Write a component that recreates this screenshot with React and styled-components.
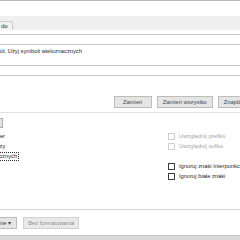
import React from 'react'
import styled, { createGlobalStyle } from 'styled-components'

const GlobalStyle = createGlobalStyle`
  html, body {
    margin: 0;
    padding: 0;
    background: #fff;
  }
  body {
    font-family: "Liberation Sans", Arial, sans-serif;
  }
`

const Screen = styled.div`
  width: 240px;
  height: 240px;
  overflow: hidden;
  background: #fff;
  font-size: 5.75px;
  color: #262626;
`

// the dialog is wider than the shot, its left side falls out of view
const Dialog = styled.div`
  width: 407px;
  margin-left: -84px;
  border-top: 1px solid #b9b9b9;
  box-sizing: border-box;
`

const TitleBar = styled.div`
  height: 15px;
`

const TabStrip = styled.div`
  display: flex;
  align-items: flex-end;
  height: 14px;
  padding-left: 6px;
  background: #efefef;
`

const Tab = styled.div`
  height: 9px;
  padding: 0 4px;
  margin-left: -1px;
  line-height: 8px;
  box-sizing: border-box;
  border: 1px solid #cdcdcd;
  border-bottom: 0;
  background: ${({ active }) => active ? '#fff' : '#f2f2f2'};
`

const Panel = styled.div`
  padding: 4px 8px 0;
`

const FieldRow = styled.div`
  display: flex;
  margin-top: ${({ top }) => top || 0}px;
`

const FieldLabel = styled.div`
  width: ${({ width }) => width || 41}px;
  flex-shrink: 0;
  line-height: ${({ height }) => height || 11}px;
`

const Input = styled.div`
  flex: 1;
  height: 11px;
  box-sizing: border-box;
  border: 1px solid #c6c6c6;
  background: #fff;
`

const OptionsLine = styled.div`
  display: flex;
  height: 13px;
  line-height: 13px;
`

const ButtonRow = styled.div`
  display: flex;
  gap: ${({ gap }) => gap || 5}px;
  margin-top: ${({ top }) => top || 0}px;
  padding-left: ${({ indent }) => indent || 0}px;
`

const Button = styled.button`
  min-width: 38px;
  height: 12px;
  padding: 0 ${({ tight }) => tight ? 4 : 5}px;
  margin: 0;
  font-family: inherit;
  font-size: inherit;
  line-height: 10px;
  white-space: nowrap;
  color: ${({ disabled }) => disabled ? '#8e8e8e' : '#444'};
  background: ${({ disabled }) => disabled ? '#e9e9e9' : '#e5e5e5'};
  border: 1px solid ${({ disabled }) => disabled ? '#d2d2d2' : '#bcbcbc'};
  border-radius: 0;
  box-sizing: border-box;
  &:first-child {
    margin-right: ${({ push }) => push ? 'auto' : '0'};
  }
`

const GroupHeader = styled.div`
  display: flex;
  align-items: center;
  gap: 3px;
  height: 9px;
  margin-top: ${({ top }) => top || 0}px;
  &::after {
    content: '';
    flex: 1;
    height: 1px;
    background: ${({ line }) => line || '#e2e2e2'};
  }
`

const SelectRow = styled.div`
  display: flex;
  align-items: center;
  height: 10px;
  margin-top: 1px;
`

const Select = styled.div`
  width: 40px;
  height: 10px;
  padding: 0 3px;
  line-height: 8px;
  box-sizing: border-box;
  background: #e4e4e4;
  border: 1px solid #adadad;
`

const OptionsGrid = styled.div`
  display: grid;
  grid-template-columns: 237px 1fr;
  grid-auto-rows: 10px;
  margin-top: 3px;
  padding-left: 7px;
`

const Check = styled.div`
  display: flex;
  align-items: center;
  gap: ${({ right }) => right ? 2 : 3}px;
  white-space: nowrap;
  color: ${({ disabled }) => disabled ? '#a3a3a3' : '#262626'};
`

const Box = styled.span`
  width: 7px;
  height: 7px;
  flex-shrink: 0;
  box-sizing: border-box;
  background: #fff;
  border: 1px solid ${({ disabled }) => disabled ? '#d0d0d0' : '#3c3c3c'};
`

const CheckText = styled.span`
  padding: 0 1px;
  line-height: 7px;
  border: 1px dotted ${({ focused }) => focused ? '#333' : 'transparent'};
`

const Footer = styled.div`
  height: 8px;
  margin-top: 6px;
  background: #d8d8d8;
  border-top: 1px solid #c8c8c8;
`

const Option = ({ label, disabled, focused, right }) => (
  <Check disabled={disabled} right={right}>
    <Box disabled={disabled} />
    <CheckText focused={focused}>{label}</CheckText>
  </Check>
)

const Empty = styled.div``

export default function App() {
  return (
    <Screen>
      <GlobalStyle />
      <Dialog>
        <TitleBar />
        <TabStrip>
          <Tab>Znajdź</Tab>
          <Tab active>Zamień</Tab>
          <Tab>Przejdź do</Tab>
        </TabStrip>
        <Panel>
          <FieldRow>
            <FieldLabel>Znajdź:</FieldLabel>
            <Input />
          </FieldRow>
          <OptionsLine>
            <FieldLabel height={13}>Opcje:</FieldLabel>
            <span>Wyszukaj w dół, Użyj symboli wieloznacznych</span>
          </OptionsLine>
          <FieldRow top={7}>
            <FieldLabel>Zamień na:</FieldLabel>
            <Input />
          </FieldRow>

          <ButtonRow top={20}>
            <Button type="button" push>Mniej &lt;&lt;</Button>
            <Button type="button">Zamień</Button>
            <Button type="button">Zamień wszystko</Button>
            <Button type="button">Znajdź następny</Button>
            <Button type="button">Anuluj</Button>
          </ButtonRow>

          <GroupHeader>Opcje wyszukiwania</GroupHeader>
          <SelectRow>
            <FieldLabel width={39} height={10}>Wyszukaj:</FieldLabel>
            <Select>Wszędzie</Select>
          </SelectRow>
          <OptionsGrid>
            <Option label="Uwzględnij wielkość liter" />
            <Option label="Uwzględnij prefiks" disabled right />
            <Option label="Znajdź tylko całe wyrazy" />
            <Option label="Uwzględnij sufiks" disabled right />
            <Option label="Użyj symboli wieloznacznych" focused />
            <Empty />
            <Option label="Podobne brzmienie" disabled />
            <Option label="Ignoruj znaki interpunkcyjne" right />
            <Empty />
            <Option label="Ignoruj białe znaki" right />
          </OptionsGrid>

          <GroupHeader top={24} line="#d6d6d6">Zamień</GroupHeader>
          <ButtonRow top={3} gap={6} indent={6}>
            <Button type="button">Formatuj ▾</Button>
            <Button type="button">Specjalne ▾</Button>
            <Button type="button" disabled tight>Bez formatowania</Button>
          </ButtonRow>
        </Panel>
        <Footer />
      </Dialog>
    </Screen>
  )
}
